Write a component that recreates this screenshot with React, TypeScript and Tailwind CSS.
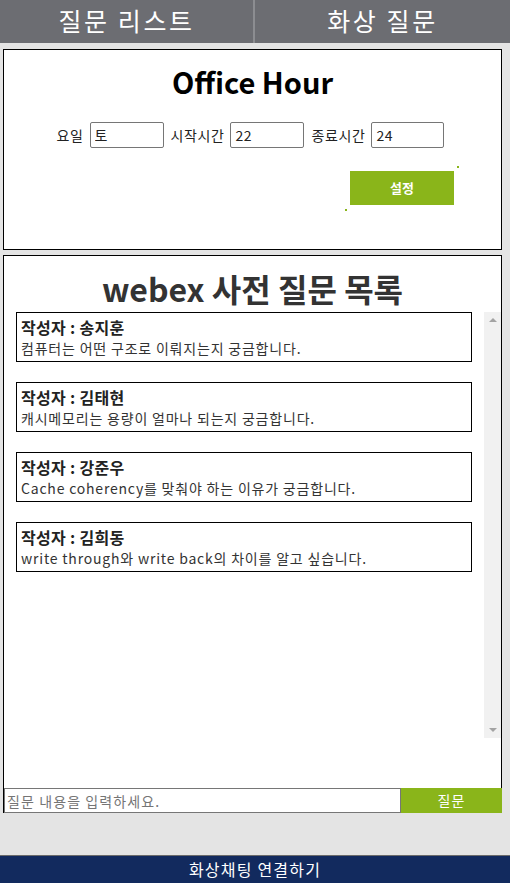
import React, { useState } from 'react'

const questions = [
  { id: 1, author: '송지훈', text: '컴퓨터는 어떤 구조로 이뤄지는지 궁금합니다.' },
  { id: 2, author: '김태현', text: '캐시메모리는 용량이 얼마나 되는지 궁금합니다.' },
  { id: 3, author: '강준우', text: 'Cache coherency를 맞춰야 하는 이유가 궁금합니다.' },
  { id: 4, author: '김희동', text: 'write through와 write back의 차이를 알고 싶습니다.' },
]

function QuestionCard({ author, text }: { author: string; text: string }) {
  return (
    <div className="h-[50px] border border-black px-[4px] pt-[3px]">
      <p className="text-[16px] leading-[22px] font-semibold tracking-[0.3px] text-[#222]">작성자 : {author}</p>
      <p className="text-[14px] leading-[20px] tracking-[0.8px] text-[#333]">{text}</p>
    </div>
  )
}

function App() {
  const [day, setDay] = useState('토')
  const [start, setStart] = useState('22')
  const [end, setEnd] = useState('24')
  const [question, setQuestion] = useState('')

  return (
    <div className="flex h-[883px] w-[510px] flex-col bg-[#e4e4e4] font-['Noto_Sans_CJK_KR',sans-serif]">
      <div className="flex h-[43px] bg-[#6c6d72] text-[25px] leading-[40px] tracking-[2.6px] text-white">
        <div className="w-[253px] text-center">질문 리스트</div>
        <div className="w-[2px] bg-[#8c8d91]" />
        <div className="flex-1 text-center">화상 질문</div>
      </div>

      <div className="mt-[6px] ml-[3px] flex h-[201px] w-[499px] flex-col items-center border border-black bg-white">
        <h1 className="pt-[13px] text-[29px] leading-[36px] font-bold text-black">Office Hour</h1>
        <div className="mt-[23px] mr-[4px] flex items-center text-[14px] tracking-[0.6px] text-[#222]">
          <span className="mr-[6px]">요일</span>
          <input
            value={day}
            onChange={(e) => setDay(e.target.value)}
            className="h-[26px] w-[74px] rounded-[2px] border border-[#767676] px-[4px] text-[14px] text-[#222] outline-none"
          />
          <span className="mr-[6px] ml-[7px]">시작시간</span>
          <input
            value={start}
            onChange={(e) => setStart(e.target.value)}
            className="h-[26px] w-[74px] rounded-[2px] border border-[#767676] px-[4px] text-[14px] text-[#222] outline-none"
          />
          <span className="mr-[6px] ml-[7px]">종료시간</span>
          <input
            value={end}
            onChange={(e) => setEnd(e.target.value)}
            className="h-[26px] w-[73px] rounded-[2px] border border-[#767676] px-[4px] text-[14px] text-[#222] outline-none"
          />
        </div>
        <div className="relative mt-[23px] mr-[47px] self-end">
          <button className="h-[34px] w-[104px] bg-[#8ab51a] text-[13px] font-bold text-white">설정</button>
          <span className="absolute top-[-5px] left-[107px] h-[2px] w-[2px] bg-[#8ab51a]" />
          <span className="absolute top-[38px] left-[-5px] h-[2px] w-[2px] bg-[#8ab51a]" />
        </div>
      </div>

      <div className="mt-[5px] ml-[3px] flex h-[558px] w-[499px] flex-col border-x border-t border-black bg-white">
        <h2 className="pt-[12px] text-center text-[32px] leading-[40px] font-bold text-[#333]">webex 사전 질문 목록</h2>
        <div className="mt-[4px] flex h-[426px]">
          <div className="ml-[12px] flex w-[456px] flex-col gap-[20px]">
            {questions.map((q) => (
              <QuestionCard key={q.id} author={q.author} text={q.text} />
            ))}
          </div>
          <div className="flex-1" />
          <div className="flex w-[17px] flex-col items-center justify-between bg-[#f1f1f1] py-[6px]">
            <span className="h-0 w-0 border-x-[4px] border-b-[4px] border-x-transparent border-b-[#a3a3a3]" />
            <span className="h-0 w-0 border-x-[4px] border-t-[4px] border-x-transparent border-t-[#a3a3a3]" />
          </div>
        </div>
        <div className="flex-1" />
        <div className="mr-[-1px] flex h-[25px]">
          <input
            value={question}
            onChange={(e) => setQuestion(e.target.value)}
            placeholder="질문 내용을 입력하세요."
            className="h-[25px] w-[397px] border border-[#767676] px-[2px] text-[14px] tracking-[1.1px] text-[#222] outline-none placeholder:text-[#757575]"
          />
          <button className="h-[25px] flex-1 bg-[#8ab51a] text-[14px] tracking-[1px] text-white">질문</button>
        </div>
      </div>

      <div className="flex-1" />
      <div className="h-[28px] border-t border-[#6a6a6a] bg-[#122a5e] text-center text-[16px] leading-[27px] tracking-[1.2px] text-white">
        화상채팅 연결하기
      </div>
    </div>
  )
}

export default App
